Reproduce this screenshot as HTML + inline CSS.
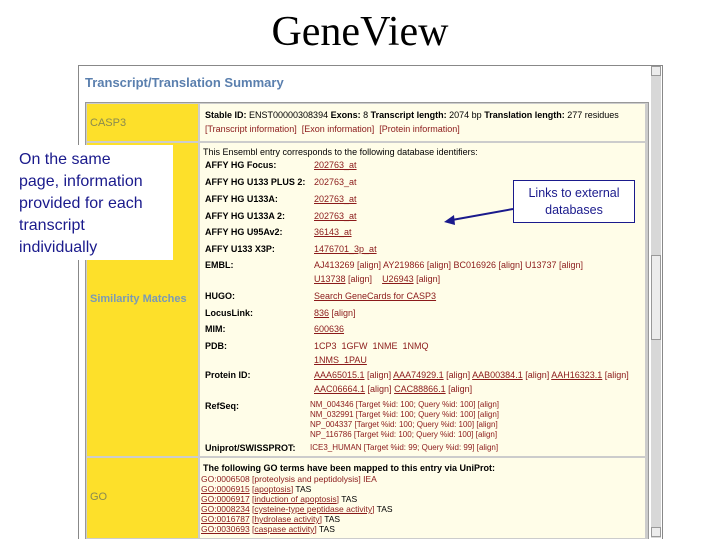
<!DOCTYPE html>
<html><head><meta charset="utf-8"><style>
*{margin:0;padding:0}
body{width:720px;height:540px;background:#fff;position:relative;overflow:hidden;font-family:"Liberation Sans",sans-serif}
.a{position:absolute;white-space:nowrap}
.t{font-size:9px;color:#000}
.b{font-weight:bold}
.l{color:#8b1a1a;text-decoration:underline}
.r{color:#8b1a1a}
.y{position:absolute;background:#fde02a}
.c{position:absolute;background:#fffde8}
</style></head><body>
<div class="a" style="left:0;width:720px;top:8px;text-align:center;font-family:'Liberation Serif',serif;font-size:42px;">GeneView</div>
<div class="a" style="left:78px;top:65px;width:583px;height:473px;border:1px solid #888;border-bottom:none;background:#fff"></div>
<div class="a" style="left:651px;top:66px;width:10px;height:472px;background:#d8d8d8"></div>
<div class="a" style="left:651px;top:66px;width:10px;height:10px;background:#ececec;border:1px solid #999;box-sizing:border-box"></div>
<div class="a" style="left:651px;top:255px;width:10px;height:85px;background:#ececec;border:1px solid #999;box-sizing:border-box"></div>
<div class="a" style="left:651px;top:527px;width:10px;height:10px;background:#ececec;border:1px solid #999;box-sizing:border-box"></div>
<div class="a" style="left:85px;top:75px;font-size:13px;font-weight:bold;color:#5a7fae">Transcript/Translation Summary</div>
<div class="a" style="left:85px;top:102px;width:562px;height:436px;border:1px solid #999;border-bottom:none;background:#ccc"></div>
<div class="y" style="left:87px;top:104px;width:111px;height:37px"></div>
<div class="c" style="left:200px;top:104px;width:445px;height:37px"></div>
<div class="y" style="left:87px;top:143px;width:111px;height:313px"></div>
<div class="c" style="left:200px;top:143px;width:445px;height:313px"></div>
<div class="y" style="left:87px;top:458px;width:111px;height:80px"></div>
<div class="c" style="left:200px;top:458px;width:445px;height:80px"></div>
<div class="a" style="left:90px;top:117px;font-size:11px;color:#8a8a50">CASP3</div>
<div class="a" style="left:90px;top:293px;font-size:11px;font-weight:bold;color:#7a9ab5">Similarity Matches</div>
<div class="a" style="left:90px;top:491px;font-size:11px;color:#8a8a50">GO</div>
<div class="a t" style="left:205px;top:110px"><b>Stable ID:</b> ENST00000308394 <b>Exons:</b> 8 <b>Transcript length:</b> 2074 bp <b>Translation length:</b> 277 residues</div>
<div class="a t r" style="left:205px;top:124px">[Transcript information] &nbsp;[Exon information] &nbsp;[Protein information]</div>
<div class="a t" style="left:203px;top:147px">This Ensembl entry corresponds to the following database identifiers:</div>
<div class="a t b" style="left:205px;top:160px">AFFY HG Focus:</div><div class="a t l" style="left:314px;top:160px">202763_at</div>
<div class="a t b" style="left:205px;top:177px">AFFY HG U133 PLUS 2:</div><div class="a t r" style="left:314px;top:177px">202763_at</div>
<div class="a t b" style="left:205px;top:194px">AFFY HG U133A:</div><div class="a t l" style="left:314px;top:194px">202763_at</div>
<div class="a t b" style="left:205px;top:211px">AFFY HG U133A 2:</div><div class="a t l" style="left:314px;top:211px">202763_at</div>
<div class="a t b" style="left:205px;top:227px">AFFY HG U95Av2:</div><div class="a t l" style="left:314px;top:227px">36143_at</div>
<div class="a t b" style="left:205px;top:244px">AFFY U133 X3P:</div><div class="a t l" style="left:314px;top:244px">1476701_3p_at</div>
<div class="a t b" style="left:205px;top:260px">EMBL:</div><div class="a t r" style="left:314px;top:260px">AJ413269 [align] AY219866 [align] BC016926 [align] U13737 [align]</div>
<div class="a t r" style="left:314px;top:274px"><u>U13738</u> [align] &nbsp;&nbsp; <u>U26943</u> [align]</div>
<div class="a t b" style="left:205px;top:291px">HUGO:</div><div class="a t l" style="left:314px;top:291px">Search GeneCards for CASP3</div>
<div class="a t b" style="left:205px;top:308px">LocusLink:</div><div class="a t r" style="left:314px;top:308px"><u>836</u> [align]</div>
<div class="a t b" style="left:205px;top:324px">MIM:</div><div class="a t l" style="left:314px;top:324px">600636</div>
<div class="a t b" style="left:205px;top:341px">PDB:</div><div class="a t r" style="left:314px;top:341px">1CP3 &nbsp;1GFW &nbsp;1NME &nbsp;1NMQ</div>
<div class="a t l" style="left:314px;top:355px">1NMS &nbsp;1PAU</div>
<div class="a t b" style="left:205px;top:370px">Protein ID:</div><div class="a t r" style="left:314px;top:370px"><u>AAA65015.1</u> [align] <u>AAA74929.1</u> [align] <u>AAB00384.1</u> [align] <u>AAH16323.1</u> [align]</div>
<div class="a t r" style="left:314px;top:384px"><u>AAC06664.1</u> [align] <u>CAC88866.1</u> [align]</div>
<div class="a t b" style="left:205px;top:401px">RefSeq:</div>
<div class="a r" style="left:310px;top:400px;font-size:8px;line-height:10px">NM_004346 [Target %id: 100; Query %id: 100] [align]<br>NM_032991 [Target %id: 100; Query %id: 100] [align]<br>NP_004337 [Target %id: 100; Query %id: 100] [align]<br>NP_116786 [Target %id: 100; Query %id: 100] [align]</div>
<div class="a t b" style="left:205px;top:443px">Uniprot/SWISSPROT:</div><div class="a r" style="left:310px;top:443px;font-size:8px">ICE3_HUMAN [Target %id: 99; Query %id: 99] [align]</div>
<div class="a t b" style="left:203px;top:463px">The following GO terms have been mapped to this entry via UniProt:</div>
<div class="a r" style="left:201px;top:474px;font-size:8.5px;line-height:10px"><span>GO:0006508 [proteolysis and peptidolysis] IEA</span><br><u>GO:0006915</u> [<u>apoptosis</u>] <span style="color:#000">TAS</span><br><u>GO:0006917</u> [<u>induction of apoptosis</u>] <span style="color:#000">TAS</span><br><u>GO:0008234</u> [<u>cysteine-type peptidase activity</u>] <span style="color:#000">TAS</span><br><u>GO:0016787</u> [<u>hydrolase activity</u>] <span style="color:#000">TAS</span><br><u>GO:0030693</u> [<u>caspase activity</u>] <span style="color:#000">TAS</span></div>
<div class="a" style="left:15px;top:145px;width:158px;height:115px;background:#fff"></div>
<div class="a" style="left:19px;top:149px;font-size:16px;line-height:22px;color:#1a1a8c">On the same<br>page, information<br>provided for each<br>transcript<br>individually</div>
<div class="a" style="left:513px;top:180px;width:122px;height:43px;background:#fff;border:1px solid #1a1a8c;box-sizing:border-box;text-align:center;font-size:12.5px;line-height:17px;color:#1a1a8c;padding-top:4px">Links to external<br>databases</div>
<svg class="a" style="left:0;top:0" width="720" height="540"><line x1="513" y1="209" x2="452" y2="220" stroke="#1a1a8c" stroke-width="2"/><polygon points="444,222 454,215 455,225" fill="#1a1a8c"/></svg>
</body></html>
